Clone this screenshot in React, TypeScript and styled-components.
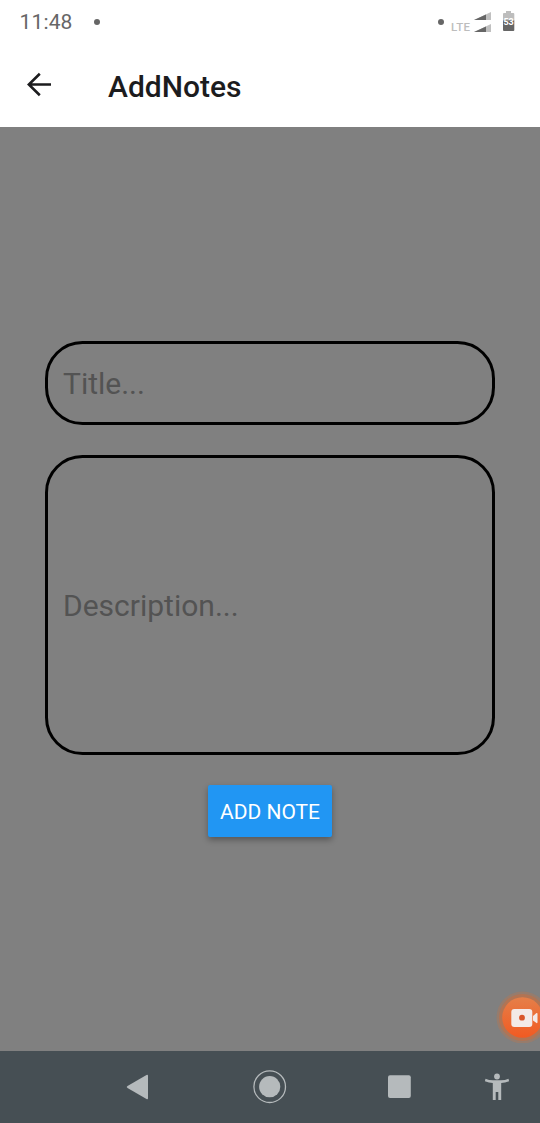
import React from "react";
import styled, { createGlobalStyle } from "styled-components";

const GlobalStyle = createGlobalStyle`
  * { box-sizing: border-box; }
  body {
    margin: 0;
    font-family: Roboto, "Noto Sans", sans-serif;
  }
`;

const Screen = styled.div`
  position: relative;
  display: flex;
  flex-direction: column;
  width: 540px;
  height: 1123px;
  overflow: hidden;
  background: #808080;
`;

const StatusBar = styled.div`
  display: flex;
  align-items: center;
  height: 43px;
  flex: none;
  padding: 0 25px 0 19.5px;
  background: #fff;
`;

const Clock = styled.span`
  width: 74.5px;
  padding-top: 1px;
  font-size: 21px;
  line-height: 24px;
  letter-spacing: 0.15px;
  color: #666;
`;

const Dot = styled.span`
  width: 6px;
  height: 6px;
  border-radius: 50%;
  background: #666;
`;

const StatusIcons = styled.div`
  display: flex;
  align-items: center;
  height: 100%;
  margin-left: auto;
`;

const Network = styled.span`
  width: 20px;
  margin: 11px 2px 0 7px;
  font-size: 11.5px;
  line-height: 12px;
  letter-spacing: 0.4px;
  font-weight: 500;
  color: #bdbdbd;
`;

const Header = styled.header`
  display: flex;
  align-items: center;
  height: 84px;
  flex: none;
  padding: 0 20px 0 27px;
  background: #fff;
`;

const Heading = styled.h1`
  margin: 3px 0 0 57px;
  font-size: 30px;
  line-height: 36px;
  font-weight: 500;
  color: #1c1c1e;
`;

const Form = styled.main`
  display: flex;
  flex: 1;
  flex-direction: column;
  align-items: center;
  justify-content: center;
  gap: 30px;
  background: #808080;
`;

const Field = styled.div<{ $height: number }>`
  display: flex;
  align-items: center;
  width: 450px;
  height: ${({ $height }) => $height}px;
  padding: 2px 15px 0;
  border: 3px solid #000;
  border-radius: 37.5px;
  font-size: 30px;
  line-height: 36px;
  color: #535353;
`;

const AddButton = styled.button`
  width: 124px;
  height: 52px;
  padding: 2px 0 0;
  border: 0;
  border-radius: 2px;
  background: #2196f3;
  box-shadow: 0 3px 6px rgba(0, 0, 0, 0.32);
  color: #fff;
  font-family: inherit;
  font-size: 21px;
  line-height: 24px;
  white-space: nowrap;
`;

const NavBar = styled.nav`
  display: flex;
  flex: none;
  height: 72px;
  background: #464f54;
`;

const Recorder = styled.div`
  position: absolute;
  left: 496px;
  top: 991px;
  width: 52px;
  height: 52px;
`;

export default function App() {
  return (
    <>
      <GlobalStyle />
      <Screen>
        <StatusBar>
          <Clock>11:48</Clock>
          <Dot />
          <StatusIcons>
            <Dot />
            <Network>LTE</Network>
            <svg width="42" height="43" viewBox="0 0 42 43">
              <path d="M1 20 18 12V20Z M1 32 18 24V32Z" fill="#c0c0c0" />
              <path d="M1 20 13 14.4V20Z M1 32 13 26.4V32Z" fill="#666" />
              <path d="M33 11h5v2h2.300q1 0 1 1v7H30v-7q0-1 1-1h2Z" fill="#bdbdbd" />
              <path d="M30 20.500h11.300v9.500q0 1-1 1h-9.300q-1 0-1-1Z" fill="#666" />
              <text x="35.600" y="24.500" textAnchor="middle" fontSize="9" fontWeight="700" fill="#fff">53</text>
            </svg>
          </StatusIcons>
        </StatusBar>
        <Header>
          <svg width="24" height="26" viewBox="0 0 24 26" fill="none" stroke="#1c1c1e" strokeWidth="2.600">
            <path d="M24 12.500H2M12.800 1.800 1.800 12.500l11 10.700" />
          </svg>
          <Heading>AddNotes</Heading>
        </Header>
        <Form>
          <Field $height={84}>Title...</Field>
          <Field $height={300}>Description...</Field>
          <AddButton>ADD NOTE</AddButton>
        </Form>
        <NavBar>
          <svg width="540" height="72" viewBox="0 0 540 72" fill="#b5babc">
            <path d="M127.500 35 146.500 24q1.500-.8 1.500.8v22.400q0 1.600-1.500.8L127.500 37q-1.600-1 0-2Z" />
            <circle cx="269.700" cy="35.700" r="15.800" fill="none" stroke="#b5babc" strokeWidth="1.300" />
            <circle cx="269.700" cy="35.700" r="10.600" />
            <rect x="388" y="24.300" width="22.800" height="22.800" rx="2" />
            <circle cx="497" cy="25.500" r="2.900" />
            <path d="M485.500 27.800Q489 29.300 493 29.300H501Q505 29.300 508.500 27.800L509.100 30.300Q505 31.700 501.200 32V49H498.300V41H495.700V49H492.800V32Q489 31.700 484.900 30.300Z" />
          </svg>
        </NavBar>
        <Recorder>
          <svg width="52" height="52" viewBox="0 0 52 52">
            <defs>
              <linearGradient id="orange" x1="0" y1="0" x2="0" y2="1">
                <stop offset="0" stopColor="#e57f49" />
                <stop offset="1" stopColor="#f15a22" />
              </linearGradient>
            </defs>
            <circle cx="26.500" cy="26.500" r="26" fill="#b7754f" opacity="0.400" />
            <circle cx="26.500" cy="26.500" r="23.500" fill="#c36f45" opacity="0.600" />
            <circle cx="26.500" cy="26.500" r="20.300" fill="url(#orange)" />
            <rect x="15.300" y="18" width="21" height="18" rx="3" fill="#f3eae8" />
            <path d="M37 25 40.500 22Q41.500 21.500 41.500 23V31Q41.500 32.500 40.500 32L37 29.500Z" fill="#f3eae8" />
            <circle cx="26" cy="26.700" r="2.900" fill="#d9562b" />
          </svg>
        </Recorder>
      </Screen>
    </>
  );
}
